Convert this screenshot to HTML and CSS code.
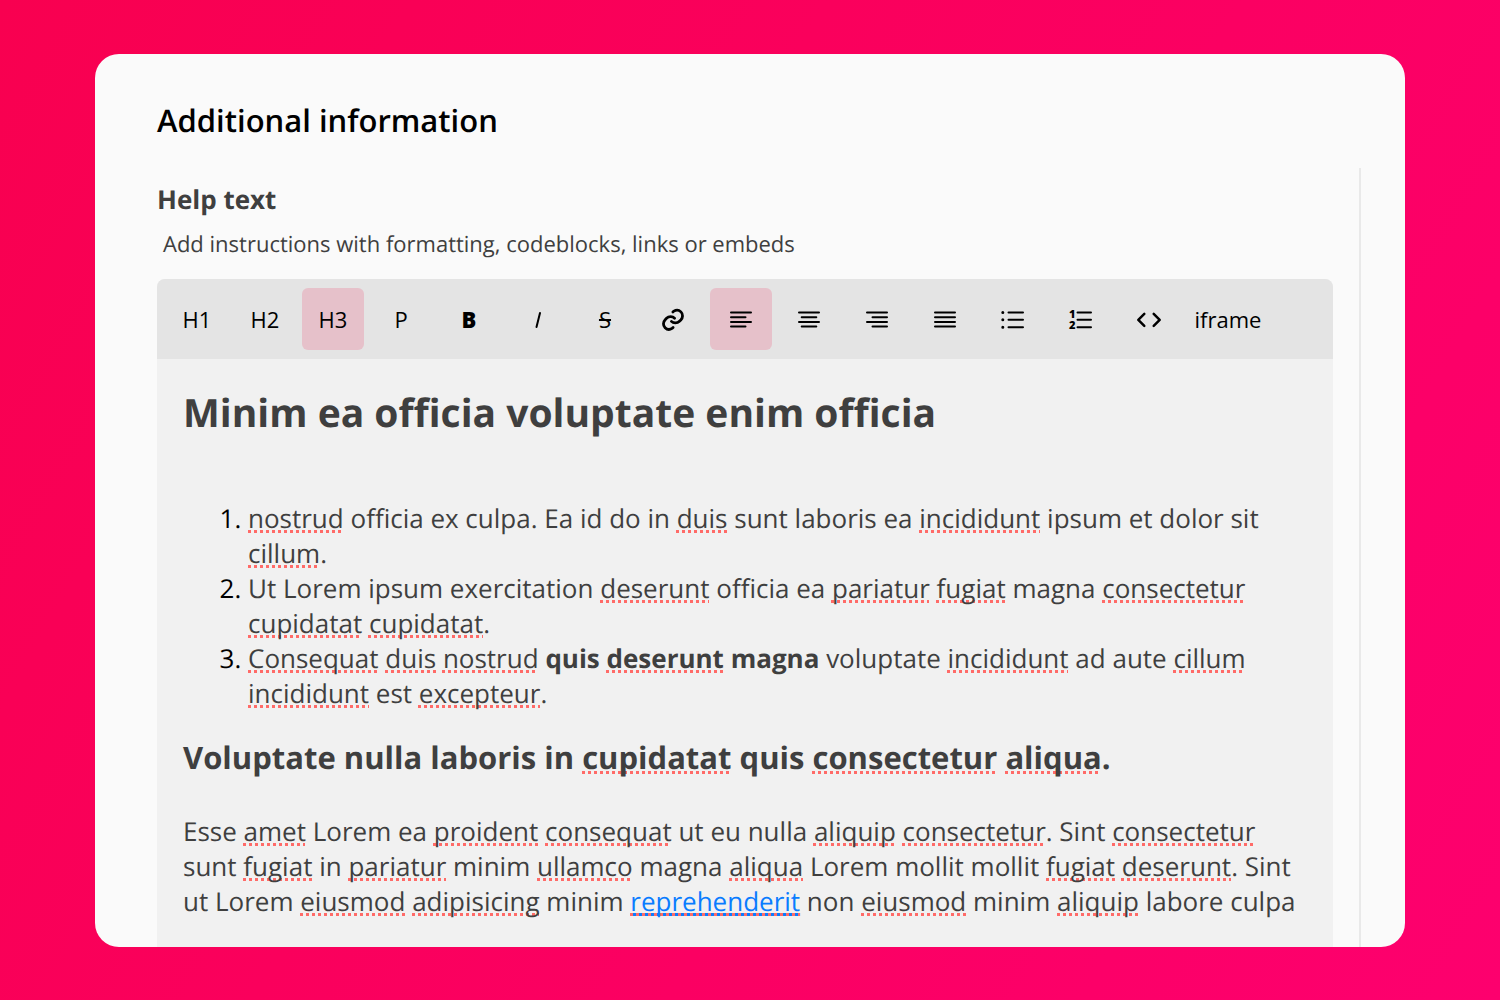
FILE: index.html
```html
<!DOCTYPE html>
<html lang="en">
  <head>
    <meta charset="UTF-8" />
    <meta name="viewport" content="width=device-width, initial-scale=1.0" />
    <title>Additional information</title>
    <link rel="stylesheet" href="styles.css">
  </head>
  <body>
    <main class="card">
      <h1 class="page-title">Additional information</h1>

      <section class="panel">
        <h2 class="field-title" id="help-label">Help text</h2>
        <p class="field-hint">Add instructions with formatting, codeblocks, links or embeds</p>

        <div class="editor">
          <!-- Formatting toolbar -->
          <div class="toolbar">
            <button type="button">H1</button>
            <button type="button">H2</button>
            <button type="button" class="active">H3</button>
            <button type="button">P</button>
            <button type="button" class="bold">B</button>
            <button type="button" aria-label="Italic">
              <svg viewBox="0 0 24 24"><path d="M15 6 11.5 20" /></svg>
            </button>
            <button type="button" class="strike">S</button>
            <button type="button" aria-label="Link">
              <svg viewBox="0 0 24 24"><path class="thick" d="M14 11.998C14 9.506 11.683 7 8.857 7H7.143C4.303 7 2 9.238 2 11.998c0 2.378 1.71 4.368 4 4.873.37.082.753.125 1.143.125M10 11.998c0 2.491 2.317 4.997 5.143 4.997h1.714c2.84 0 5.143-2.237 5.143-4.997 0-2.379-1.71-4.37-4-4.874A5.304 5.304 0 0 0 16.857 7" transform="translate(12 12.8) rotate(-45) scale(1.12) translate(-12 -12)" /></svg>
            </button>
            <button type="button" class="active" aria-label="Align left">
              <svg viewBox="0 0 24 24"><path d="M2 5.5h20M2 10.2h14.5M2 14.9h20M2 19.5h14.5" /></svg>
            </button>
            <button type="button" aria-label="Align center">
              <svg viewBox="0 0 24 24"><path d="M2 5.5h20M4.7 10.2h14.6M2 14.9h20M4.7 19.5h14.6" /></svg>
            </button>
            <button type="button" aria-label="Align right">
              <svg viewBox="0 0 24 24"><path d="M2 5.5h20M7.5 10.2h14.5M2 14.9h20M7.5 19.5h14.5" /></svg>
            </button>
            <button type="button" aria-label="Justify">
              <svg viewBox="0 0 24 24"><path d="M2 5.5h20M2 10.2h20M2 14.9h20M2 19.5h20" /></svg>
            </button>
            <button type="button" aria-label="Bullet list">
              <svg viewBox="0 0 24 24"><path d="M7.5 5.4h14.5M7.5 12.8h14.5M7.5 20.2h14.5" /><path class="dots" d="M1.8 5.4h.01M1.8 12.8h.01M1.8 20.2h.01" /></svg>
            </button>
            <button type="button" aria-label="Numbered list">
              <svg viewBox="0 0 24 24"><path d="M8.5 5.4h13.5M8.5 12.8h13.5M8.5 20.2h13.5" /><text x="0" y="11">1</text><text x="0" y="22">2</text></svg>
            </button>
            <button type="button" aria-label="Code">
              <svg viewBox="0 0 24 24"><path class="thick" d="m7.3 6.8-6 6 6 6M16.7 6.8l6 6-6 6" /></svg>
            </button>
            <button type="button" class="wide">iframe</button>
          </div>

          <!-- Editable content, misspelled words are wrapped in <u> -->
          <div class="content" contenteditable="true" spellcheck="false" role="textbox" aria-multiline="true" aria-labelledby="help-label">
            <h1>Minim ea officia voluptate enim officia</h1>
            <ol>
              <li><u>nostrud</u> officia ex culpa. Ea id do in <u>duis</u> sunt laboris ea <u>incididunt</u> ipsum et dolor sit <u>cillum</u>.</li>
              <li>Ut Lorem ipsum exercitation <u>deserunt</u> officia ea <u>pariatur</u> <u>fugiat</u> magna <u>consectetur</u> <u>cupidatat</u> <u>cupidatat</u>.</li>
              <li><u>Consequat</u> <u>duis</u> <u>nostrud</u> <strong>quis <u>deserunt</u> magna</strong> voluptate <u>incididunt</u> ad aute <u>cillum</u> <u>incididunt</u> est <u>excepteur</u>.</li>
            </ol>
            <h3>Voluptate nulla laboris in <u>cupidatat</u> quis <u>consectetur</u> <u>aliqua</u>.</h3>
            <p>Esse <u>amet</u> Lorem ea <u>proident</u> <u>consequat</u> ut eu nulla <u>aliquip</u> <u>consectetur</u>. Sint <u>consectetur</u> sunt <u>fugiat</u> in <u>pariatur</u> minim <u>ullamco</u> magna <u>aliqua</u> Lorem mollit mollit <u>fugiat</u> <u>deserunt</u>. Sint ut Lorem <u>eiusmod</u> <u>adipisicing</u> minim <a href="#"><u>reprehenderit</u></a> non <u>eiusmod</u> minim <u>aliquip</u> labore culpa</p>
          </div>
        </div>
      </section>
    </main>
  </body>
</html>
```
FILE: styles.css
```css
* {
  box-sizing: border-box;
}
body {
  margin: 0;
  height: 100vh;
  padding: 54px 95px 53px;
  background: linear-gradient(120deg, #f80050, #fd006e);
  font-family: "Open Sans", sans-serif;
  text-rendering: geometricPrecision;
  color: #3f3f3f;
}
.card {
  display: flex;
  flex-direction: column;
  height: 100%;
  padding: 43px 44px 0 62px;
  background: #fafafa;
  border-radius: 24px;
  overflow: hidden;
}
.page-title {
  margin: 0 0 23px;
  font-size: 31px;
  line-height: 48px;
  font-weight: 600;
  color: #000;
}
.panel {
  flex: 1;
  display: flex;
  flex-direction: column;
  padding: 11px 26px 0 0;
  border-right: 2px solid #e9e9e9;
}
.field-title {
  margin: 0;
  font-size: 26px;
  line-height: 40px;
  font-weight: 700;
}
.field-hint {
  margin: 8px 0 18px;
  padding-left: 6px;
  font-size: 22px;
  line-height: 34px;
}
.editor {
  flex: 1;
  display: flex;
  flex-direction: column;
  background: #f1f1f1;
  border-radius: 8px 8px 0 0;
  overflow: hidden;
}
.toolbar {
  display: flex;
  gap: 6px;
  padding: 9px;
  background: #e4e4e4;
}
.toolbar button {
  display: flex;
  align-items: center;
  justify-content: center;
  width: 62px;
  height: 62px;
  padding: 0;
  border: none;
  border-radius: 6px;
  background: none;
  color: #000;
  font-family: inherit;
  font-size: 22px;
  cursor: pointer;
}
.toolbar .active {
  background: #e6c1ca;
}
.toolbar .bold {
  font-weight: 800;
}
.toolbar .strike {
  text-decoration: line-through;
}
.toolbar .wide {
  width: 84px;
}
.toolbar svg {
  width: 24px;
  height: 24px;
  overflow: visible;
  fill: none;
  stroke: currentColor;
  stroke-width: 2;
  stroke-linecap: round;
  stroke-linejoin: round;
}
.toolbar .thick {
  stroke-width: 2.5;
}
.toolbar .dots {
  stroke-width: 3;
}
.toolbar text {
  fill: currentColor;
  stroke: none;
  font-size: 11px;
  font-weight: 800;
}
.content {
  flex: 1;
  padding: 24px 26px 0;
  font-size: 26px;
  line-height: 35px;
  outline: none;
}
.content h1 {
  margin: 0 0 58px;
  font-size: 39px;
  line-height: 60px;
}
.content ol {
  margin: 0 0 23px;
  padding-left: 65px;
}
.content li::marker {
  color: #000;
}
.content h3 {
  margin: 0 0 32px;
  font-size: 31px;
  line-height: 48px;
}
.content p {
  margin: 0;
}
.content u {
  text-decoration: underline dotted #ff6b68 3px;
  text-decoration-skip-ink: none;
  text-underline-offset: 2px;
}
.content a {
  color: #0a7cff;
  text-decoration-thickness: 3px;
  text-underline-offset: 2px;
}
```
